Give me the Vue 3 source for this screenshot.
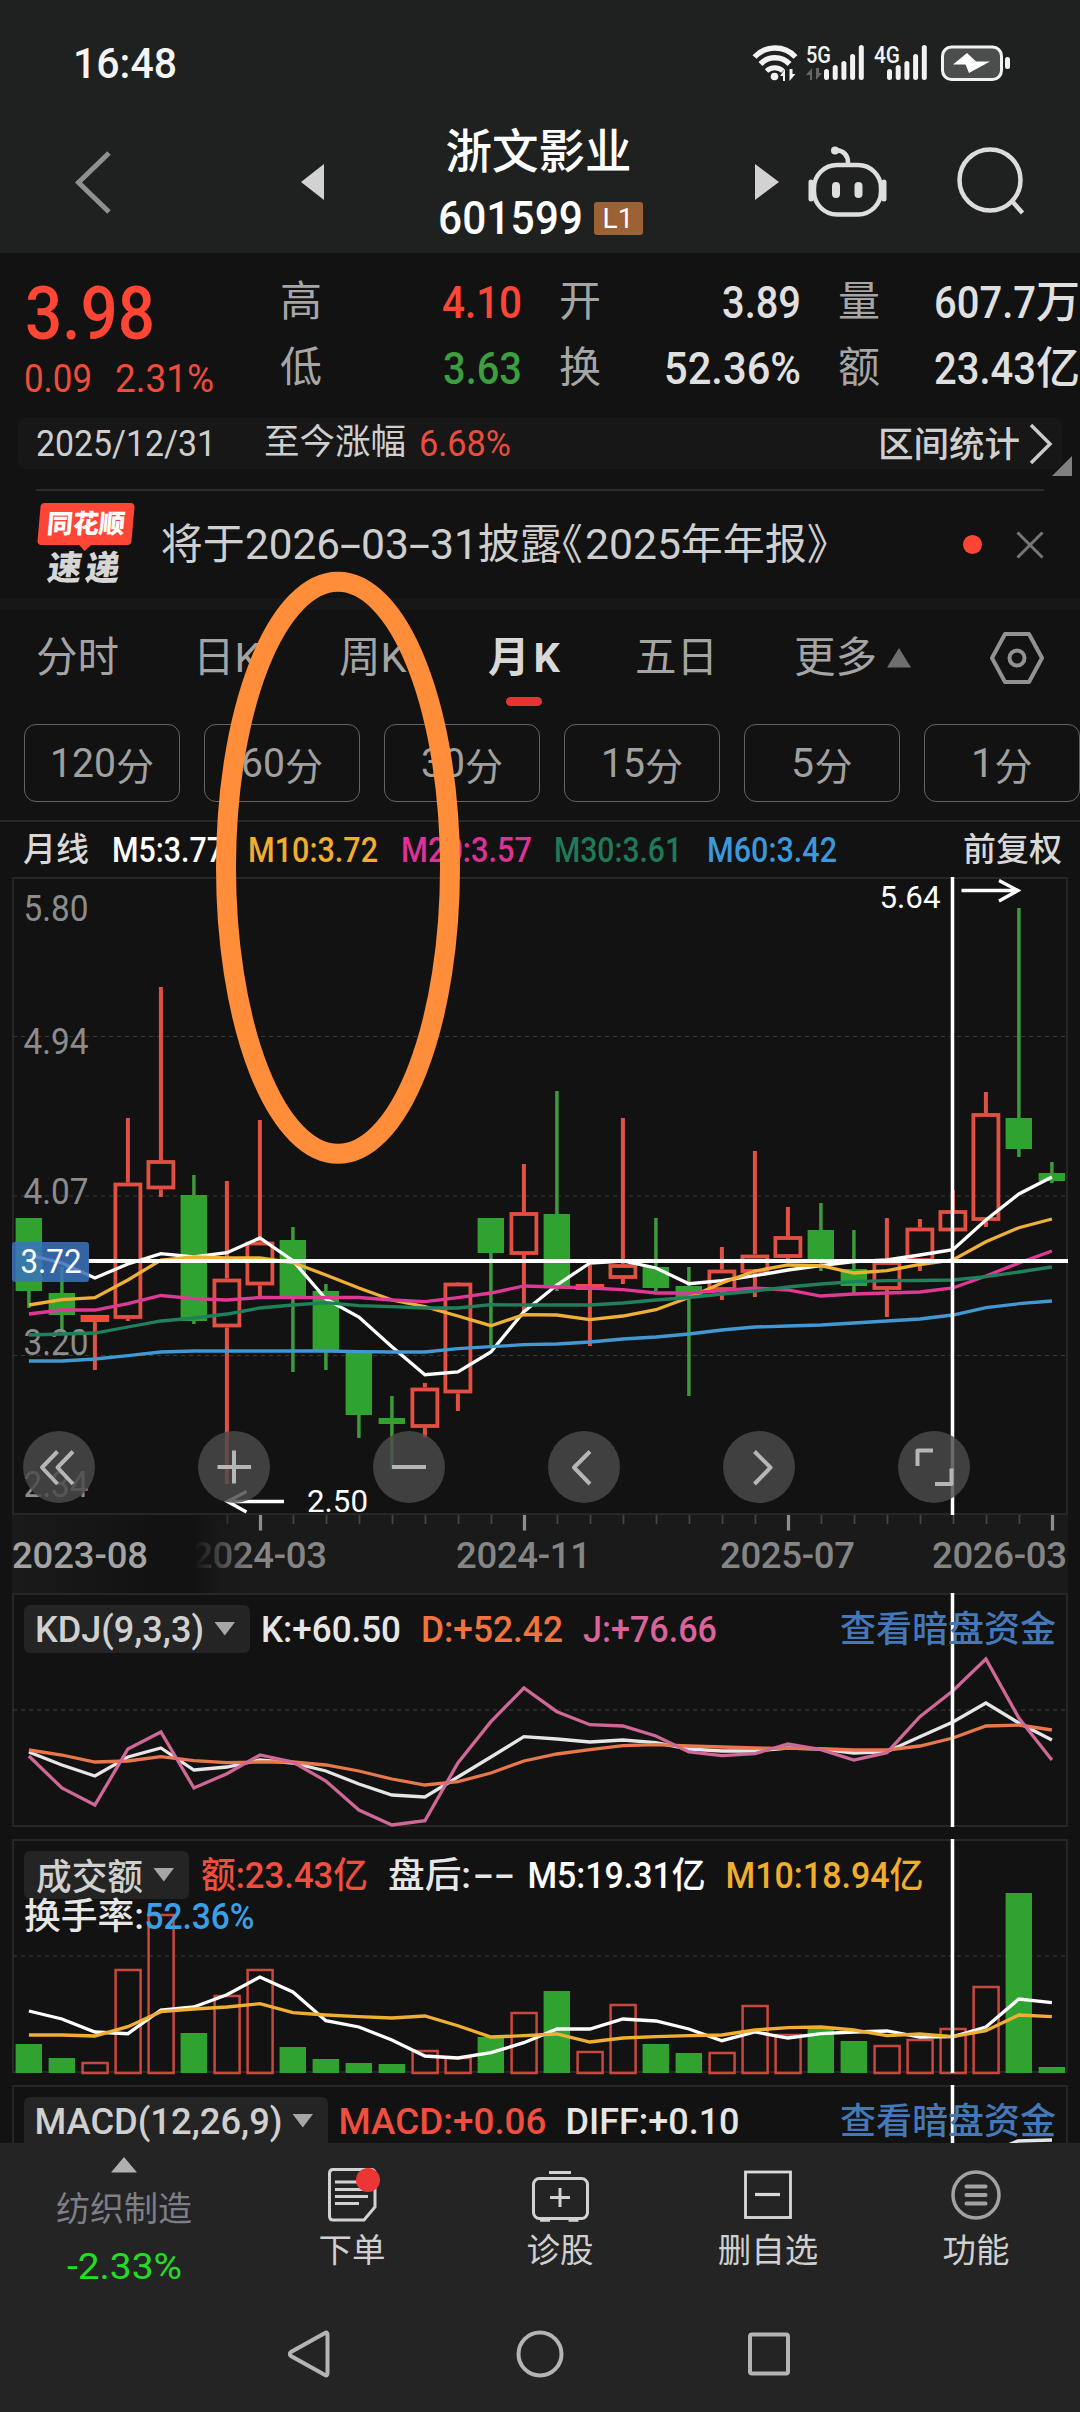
<script setup>
const vFit = {
  mounted(el, { value }) {
    const natural = el.getBoundingClientRect().width
    if (!natural) return
    el.style.transform = `scaleX(${value / natural})`
    el.style.marginRight = `${value - natural}px`
  }
}

const quotes = [
  [
    { k: '高', v: '4.10', w: 80, c: 'up' },
    { k: '开', v: '3.89', w: 79 },
    { k: '量', v: '607.7', w: 102, u: '万' }
  ],
  [
    { k: '低', v: '3.63', w: 79, c: 'down' },
    { k: '换', v: '52.36%', w: 137 },
    { k: '额', v: '23.43', w: 102, u: '亿' }
  ]
]

const tabs = [
  { t: '分时', x: 36 },
  { t: '日K', x: 193 },
  { t: '周K', x: 339 },
  { t: '月K', x: 488, on: true },
  { t: '五日', x: 635 },
  { t: '更多', x: 794, more: true }
]

const minutes = [
  { n: '120', w: 66 },
  { n: '60', w: 44 },
  { n: '30', w: 44 },
  { n: '15', w: 44 },
  { n: '5', w: 23 },
  { n: '1', w: 23 }
]

const averages = [
  { t: 'M5:3.77', x: 112, w: 112, c: '#ffffff' },
  { t: 'M10:3.72', x: 248, w: 130, c: '#f0ae2c' },
  { t: 'M20:3.57', x: 401, w: 131, c: '#dc3298' },
  { t: 'M30:3.61', x: 554, w: 128, c: '#1f7a57' },
  { t: 'M60:3.42', x: 707, w: 130, c: '#3c98d8' }
]

const px = (i) => 28.9 + i * 33
const line = (ys) => ys.map((y, i) => `${px(i).toFixed(1)},${y}`).join(' ')

// up, body top, body bottom, high, low
const candles = [
  [0, 1218, 1291, 1218, 1308], [0, 1293, 1315, 1267, 1330], [1, 1315, 1322, 1315, 1370],
  [1, 1182.5, 1319, 1118, 1321], [1, 1160, 1189.5, 987, 1197], [0, 1195, 1321, 1175, 1324],
  [1, 1278.5, 1327.5, 1181, 1484], [1, 1241.5, 1285.5, 1120, 1296], [0, 1240, 1298, 1227, 1372],
  [0, 1291, 1351, 1284, 1370], [0, 1353, 1415, 1353, 1438], [0, 1418, 1424, 1396, 1469],
  [1, 1387.5, 1428, 1383, 1438], [1, 1282.5, 1393.5, 1282, 1411], [0, 1218, 1253, 1218, 1345],
  [1, 1212, 1255, 1164, 1312], [0, 1214, 1286, 1091, 1291], [1, 1284, 1290, 1265, 1346],
  [1, 1264, 1279, 1118, 1284], [0, 1267, 1288, 1218, 1291], [0, 1286, 1297, 1267, 1396],
  [1, 1269.5, 1291, 1247, 1300], [1, 1254.5, 1273, 1151, 1297], [1, 1236, 1258, 1207, 1262],
  [0, 1230, 1261, 1203, 1271], [0, 1269, 1286, 1230, 1293], [1, 1261, 1290, 1218, 1317],
  [1, 1227.5, 1262, 1219, 1271], [1, 1210, 1231.5, 1190, 1231], [1, 1113, 1221, 1092, 1227],
  [0, 1118, 1149, 908, 1157], [0, 1173, 1181, 1162, 1183]
]

const maLines = [
  { c: '#ffffff', p: [1255, 1263, 1278, 1264, 1253.7, 1257, 1252.7, 1238, 1260.7, 1299, 1317, 1346.7, 1374.7, 1372, 1352, 1311.7, 1285, 1263, 1261, 1268, 1283.7, 1280.7, 1275.7, 1270, 1265.7, 1261.7, 1260, 1255, 1249.7, 1220, 1194, 1177] },
  { c: '#f0b037', p: [1305, 1299.7, 1297.7, 1280, 1260, 1257, 1258, 1258, 1262.5, 1275, 1288, 1300, 1306.7, 1316, 1325.7, 1314.7, 1315, 1319.7, 1316, 1309.7, 1297.5, 1283, 1271, 1265, 1265.7, 1273, 1270.7, 1264.5, 1260, 1241.7, 1227.7, 1219] },
  { c: '#dc3a95', p: [1314, 1310, 1310, 1303.7, 1295.5, 1298.7, 1300, 1297.5, 1297.7, 1297.5, 1297.5, 1300, 1301.7, 1297.7, 1293, 1286, 1287, 1288, 1289.7, 1293, 1293, 1290.7, 1288, 1290, 1296, 1294, 1293, 1292, 1288, 1276, 1263, 1251] },
  { c: '#20805c', p: [1335, 1334, 1333, 1327, 1321, 1318, 1314, 1308, 1305, 1302.7, 1305.7, 1306.7, 1308, 1308, 1304.7, 1305, 1305, 1305, 1303, 1300, 1297.5, 1294, 1291, 1287, 1284, 1281.7, 1280.7, 1280.5, 1280, 1276.7, 1272, 1267] },
  { c: '#4298d2', p: [1361, 1361, 1359, 1355.7, 1352, 1351, 1351, 1351, 1351, 1351, 1351.7, 1352, 1352, 1348.7, 1346.7, 1344.7, 1344, 1342, 1339, 1337, 1334, 1330, 1327, 1326, 1325, 1323, 1321, 1319, 1315, 1307.7, 1303.7, 1301] }
]

const kdj = [
  { c: '#e6e6e6', p: [1752, 1765, 1776, 1757, 1748, 1770, 1767, 1760, 1763, 1771, 1784, 1795, 1797, 1777, 1757, 1736.7, 1739, 1742, 1740, 1742.7, 1749, 1751, 1751, 1748, 1749, 1753, 1751.7, 1736.7, 1722, 1703, 1723, 1740] },
  { c: '#e8784a', p: [1750, 1755, 1762, 1761, 1756.7, 1760.7, 1762.7, 1762, 1762, 1765, 1771, 1779, 1785, 1781.7, 1773, 1761, 1754, 1749.7, 1745.7, 1744.7, 1746, 1747, 1748, 1748.3, 1748.7, 1750, 1750, 1746, 1738, 1726, 1725, 1730] },
  { c: '#cf6797', p: [1756, 1788, 1805, 1749, 1732, 1788, 1773.7, 1755, 1762, 1781, 1810, 1825, 1820.7, 1763, 1721.7, 1688, 1711.7, 1724.7, 1726, 1736, 1752, 1755.7, 1753.7, 1744, 1749.7, 1760, 1752.7, 1716.7, 1690.7, 1659, 1718, 1760] }
]

const volumes = [2044, 2058, 2062, 1969, 1914, 2033, 1995, 1969, 2047, 2059, 2063, 2064, 2050, 2057, 2037, 2012, 1991, 2051, 2004, 2044, 2053, 2052, 2005, 2034, 2029, 2041, 2045, 2039, 2028, 1986, 1893, 2067]

const volLines = [
  { c: '#ffffff', p: [2011, 2019, 2032, 2033.7, 2010, 2007, 1994.7, 1977, 1992, 2020.7, 2027, 2040, 2056, 2058, 2052.7, 2042.7, 2029, 2029, 2019, 2021, 2029, 2040.7, 2032, 2038, 2033.7, 2032, 2031, 2037, 2036.7, 2027, 1999, 2002.7] },
  { c: '#f0ae35', p: [2035, 2035, 2036, 2026.7, 2011.7, 2009, 2007, 2003.7, 2012.7, 2015, 2016.7, 2018, 2016, 2025.7, 2037, 2035.7, 2034, 2042, 2038, 2036.7, 2035.7, 2035, 2030, 2027.7, 2027, 2030, 2035.7, 2034, 2036.7, 2030.7, 2015, 2016.7] }
]

const prices = [['5.80', 920.5], ['4.94', 1054], ['4.07', 1203.5], ['3.20', 1355], ['2.34', 1496.5]]
const dates = [['2024-03', 193], ['2024-11', 457], ['2025-07', 721], ['2026-03', 933]]
const ticks = Array.from({ length: 26 }, (_, n) => n + 6)
const tools = [
  'M57.500 1451.500L42 1467.500L57.500 1484M73 1451.500L57.500 1467.500L73 1484',
  'M217.500 1467H251M234 1450.500V1483.500',
  'M392 1467H426',
  'M590 1451.500L574 1467.500L590 1484',
  'M754.500 1451.500L770.500 1467.500L754.500 1484',
  'M933 1450.500H917.500V1466M951.500 1468.500V1484H935'
]
</script>

<template>
  <div class="screen">
    <div class="status">
      <span v-fit="104" class="clock fit">16:48</span>
      <svg width="262" height="44" viewBox="751 41 262 44">
        <g fill="none" stroke="#f2f2f2" stroke-width="5.500">
          <path d="M754.500 57A28 28 0 0 1 795.500 57" />
          <path d="M760.500 64A20 20 0 0 1 789.500 64" />
          <path d="M766.500 71A12 12 0 0 1 783 71" stroke-width="5" />
        </g>
        <circle cx="774.500" cy="76.500" r="3.800" fill="#f2f2f2" />
        <path d="M785 69v12h-2v-5h-3zM789.500 69v12l6-7h-3v-5z" fill="#f2f2f2" />
        <path d="M812 68v12h-2v-5h-4zM816 68v12l6-7h-3v-5z" fill="#666" />
        <g fill="#f2f2f2" class="net">
          <text x="806" y="62.500" textLength="25" lengthAdjust="spacingAndGlyphs">5G</text>
          <text x="874" y="62.500" textLength="26" lengthAdjust="spacingAndGlyphs">4G</text>
        </g>
        <g fill="#f2f2f2">
          <template v-for="b in [824, 887]" :key="b">
            <rect v-for="(h, n) in [11, 15, 19, 26, 35]" :key="n" :x="b + n * 8.7" :y="80 - h" width="5" :height="h" rx="2.500" />
          </template>
        </g>
        <rect x="942.500" y="47" width="59" height="32.500" rx="9" fill="#4c4d4d" stroke="#f2f2f2" stroke-width="3" />
        <rect x="1005" y="57" width="5" height="12" rx="2.500" fill="#f2f2f2" />
        <path d="M967 53l-14 11.500h12.500l3.500 8.500l21-11.500h-14z" fill="#fff" />
      </svg>
    </div>

    <div class="title">
      <svg class="back" width="40" height="70" viewBox="73 147 40 70"><path d="M109 153L78.500 182.500L109 212" fill="none" stroke="#909090" stroke-width="5" /></svg>
      <svg width="24" height="36" viewBox="0 0 24 36"><path d="M0 18L23 0V36z" fill="#d2d2d2" /></svg>
      <div class="stock">
        <div class="name">浙文影业</div>
        <div class="code"><span v-fit="145" class="fit">601599</span><i>L1</i></div>
      </div>
      <svg width="24" height="36" viewBox="0 0 24 36"><path d="M24 18L0 0V36z" fill="#d2d2d2" /></svg>
      <svg class="robot" width="80" height="76" viewBox="807 143 80 76" fill="none" stroke="#dedede" stroke-width="4.500">
        <path d="M836 149Q848 150 848 162" />
        <circle cx="835" cy="149.500" r="4" fill="#dedede" stroke="none" />
        <rect x="814" y="164" width="67" height="49.500" rx="23" />
        <path d="M811 181v17M884 181v17" stroke-width="5" stroke-linecap="round" />
        <path d="M836 185v8M858.500 185v8" stroke-width="8" stroke-linecap="round" />
      </svg>
      <svg class="search" width="72" height="72" viewBox="955 146 72 72" fill="none" stroke="#dcdcdc" stroke-width="4.500">
        <circle cx="990" cy="180" r="30.500" /><path d="M1012 201L1022.500 213" />
      </svg>
    </div>

    <div class="quote">
      <div class="last up">
        <div class="price"><span v-fit="130" class="fit">3.98</span></div>
        <div class="change"><span v-fit="68" class="fit">0.09</span><span v-fit="99" class="fit">2.31%</span></div>
      </div>
      <div class="grid">
        <div v-for="(row, r) in quotes" :key="r" class="qrow">
          <div v-for="q in row" :key="q.k" class="cell">
            <b>{{ q.k }}</b>
            <div class="val" :class="q.c"><span v-fit="q.w" class="fit">{{ q.v }}</span><em v-if="q.u">{{ q.u }}</em></div>
          </div>
        </div>
      </div>
    </div>

    <div class="range">
      <span v-fit="180" class="fit num">2025/12/31</span>
      <span class="since">至今涨幅</span>
      <span v-fit="92" class="fit num up">6.68%</span>
      <span class="stat">区间统计</span>
      <svg width="24" height="42" viewBox="0 0 24 42"><path d="M2 2L21 21L2 40" fill="none" stroke="#ccc" stroke-width="3.500" /></svg>
      <svg class="corner" width="20" height="20" viewBox="0 0 20 20"><path d="M20 0V20H0z" fill="#808080" /></svg>
    </div>

    <div class="news">
      <div class="logo">
        <div class="tag"><span>同花顺</span></div>
        <div class="express">速递</div>
      </div>
      <div class="headline">
        <span>将于</span><span v-fit="95" class="fit">2026</span><span v-fit="21" class="fit">-</span><span v-fit="48" class="fit">03</span><span v-fit="21" class="fit">-</span><span v-fit="48" class="fit">31</span><span class="half">披露《</span><span v-fit="96" class="fit year">2025</span><span class="half">年年报》</span>
      </div>
      <span class="dot"></span>
      <svg width="28" height="28" viewBox="0 0 28 28"><path d="M1.500 1.500L26.500 26.500M26.500 1.500L1.500 26.500" stroke="#777" stroke-width="3" /></svg>
    </div>

    <div class="band"></div>

    <div class="tabs">
      <div v-for="(t, n) in tabs" :key="t.t" class="tab" :class="{ on: t.on }" :style="{ width: (n < 5 ? tabs[n + 1].x : 990) - t.x + 'px' }">
        <span>{{ t.t }}</span>
        <svg v-if="t.more" width="26" height="22" viewBox="0 0 26 22"><path d="M13 1L25 20.500H1z" fill="#6e6e6e" /></svg>
      </div>
      <svg class="gear" width="56" height="56" viewBox="0 0 56 56" fill="none" stroke="#929292" stroke-width="4">
        <path d="M16 4H40L53 28L40 52H16L3 28z" stroke-linejoin="round" /><circle cx="28" cy="28" r="7.500" />
      </svg>
    </div>

    <div class="minutes">
      <div v-for="m in minutes" :key="m.n"><span v-fit="m.w" class="fit">{{ m.n }}</span><em>分</em></div>
    </div>

    <div class="averages">
      <span class="cn">月线</span>
      <div v-for="(a, n) in averages" :key="a.t" :style="{ color: a.c, width: (n < 4 ? averages[n + 1].x : 963) - a.x + 'px' }"><span v-fit="a.w" class="fit">{{ a.t }}</span></div>
      <span class="cn">前复权</span>
    </div>

    <svg class="panel" width="1080" height="717" viewBox="0 876 1080 717">
      <g stroke="#383838" stroke-width="1.200" stroke-dasharray="4 4" fill="none">
        <path d="M13 1036.500H1066M13 1196H1066M13 1355.500H1066" />
      </g>
      <path d="M13 1514V878H1067V1514z" fill="none" stroke="#262626" stroke-width="2" />
      <g v-for="(k, i) in candles" :key="i">
        <template v-if="k[0]">
          <path :d="`M${px(i)} ${k[3]}V${k[1]}M${px(i)} ${k[2]}V${k[4]}`" stroke="#e05043" stroke-width="4" />
          <rect v-if="k[2] - k[1] < 8" :x="px(i) - 14.300" :y="k[1]" width="28.600" :height="k[2] - k[1]" fill="#f54a38" />
          <rect v-else :x="px(i) - 12.500" :y="k[1] + 2" width="25" :height="k[2] - k[1] - 4" fill="none" stroke="#e05043" stroke-width="3.800" />
        </template>
        <template v-else>
          <path :d="`M${px(i)} ${k[3]}V${k[4]}`" stroke="#3c9a3c" stroke-width="3.500" />
          <rect :x="px(i) - 13.300" :y="k[1]" width="26.400" :height="k[2] - k[1]" fill="#30a230" />
        </template>
      </g>
      <g fill="#8c8c8c" font-size="36.500">
        <text v-for="p in prices" :key="p[0]" x="23.500" :y="p[1]" textLength="65" lengthAdjust="spacingAndGlyphs">{{ p[0] }}</text>
      </g>
      <polyline v-for="l in maLines" :key="l.c" :points="line(l.p)" fill="none" :stroke="l.c" stroke-width="3.300" />
      <g fill="none" stroke="#fff" stroke-width="3.300">
        <path d="M961.500 890.500H1018M999 880.500L1018 890.500L999 901" />
        <path d="M284 1501.500H228M246.500 1491.500L227.500 1501.500L246.500 1512" />
      </g>
      <g fill="#fff" font-size="32">
        <text x="879.500" y="907.500" textLength="61" lengthAdjust="spacingAndGlyphs">5.64</text>
        <text x="307" y="1511.500" textLength="61" lengthAdjust="spacingAndGlyphs">2.50</text>
      </g>
      <path d="M88 1261H1068" stroke="#fff" stroke-width="3.800" />
      <path d="M952.500 877V1515" stroke="#fff" stroke-width="3.500" />
      <rect x="12" y="1242" width="77" height="40" rx="3" fill="#3b72bd" opacity=".86" />
      <text x="20.500" y="1272.500" font-size="33" fill="#fff" textLength="61" lengthAdjust="spacingAndGlyphs">3.72</text>
      <g v-for="(d, n) in tools" :key="d">
        <circle :cx="59 + n * 175" cy="1467" r="36" fill="#4a4a4a" opacity=".82" />
        <path :d="d" fill="none" stroke="#b6b6b6" stroke-width="4" stroke-linejoin="round" />
      </g>
      <rect x="12" y="1515" width="1056" height="78" fill="#1a1a1a" />
      <g v-for="i in ticks" :key="i">
        <path v-if="(i - 7) % 8 === 0" :d="`M${px(i) + 0.6} 1515v15.500`" stroke="#8d8d8d" stroke-width="3.200" />
        <path v-else :d="`M${px(i) + 0.6} 1515v9`" stroke="#464646" stroke-width="1.800" />
      </g>
      <g fill="#858585" class="dates">
        <text v-for="d in dates" :key="d[0]" :x="d[1] - 1" y="1568" textLength="135" lengthAdjust="spacing">{{ d[0] }}</text>
      </g>
      <defs><linearGradient id="fade"><stop offset="0" stop-color="#1a1a1a" /><stop offset=".6" stop-color="#121212" /><stop offset=".76" stop-color="#121212" /><stop offset="1" stop-color="#1a1a1a" stop-opacity="0" /></linearGradient></defs>
      <rect x="12" y="1515" width="240" height="78" fill="url(#fade)" />
      <text x="12" y="1568" class="dates" fill="#a3a3a3" textLength="136" lengthAdjust="spacing">2023-08</text>
    </svg>

    <svg class="panel" width="1080" height="246" viewBox="0 1593 1080 246">
      <path d="M13 1594H1067V1826H13z" fill="none" stroke="#262626" stroke-width="2" />
      <path d="M13 1710H1066" stroke="#303030" stroke-width="1.500" stroke-dasharray="4 4" />
      <polyline v-for="l in kdj" :key="l.c" :points="line(l.p)" fill="none" :stroke="l.c" stroke-width="3.300" />
      <path d="M952.500 1593V1827" stroke="#fff" stroke-width="3.500" />
      <rect x="24" y="1605" width="226" height="48" rx="6" fill="#242424" />
      <path d="M214.500 1622H235L224.800 1635.500z" fill="#a6a6a6" />
      <g class="mixed">
        <text x="35" y="1642" fill="#d0d0d0" textLength="169" lengthAdjust="spacingAndGlyphs">KDJ(9,3,3)</text>
        <text x="261" y="1642" fill="#e6e6e6" textLength="140" lengthAdjust="spacingAndGlyphs">K:+60.50</text>
        <text x="421" y="1642" fill="#f0743c" textLength="142" lengthAdjust="spacingAndGlyphs">D:+52.42</text>
        <text x="583" y="1642" fill="#d9649a" textLength="134" lengthAdjust="spacingAndGlyphs">J:+76.66</text>
      </g>
      <text class="link" x="840" y="1642">查看暗盘资金</text>
    </svg>

    <svg class="panel" width="1080" height="246" viewBox="0 1839 1080 246">
      <path d="M13 1840H1067V2072H13z" fill="none" stroke="#262626" stroke-width="2" />
      <path d="M13 1956H1066" stroke="#303030" stroke-width="1.500" stroke-dasharray="4 4" />
      <template v-for="(y, i) in volumes" :key="i">
        <rect v-if="candles[i][0]" :x="px(i) - 12.300" :y="y + 1" width="25" :height="2072 - y" fill="none" stroke="#c9483e" stroke-width="2.500" />
        <rect v-else :x="px(i) - 13.300" :y="y" width="26.400" :height="2073 - y" fill="#30a230" />
      </template>
      <polyline v-for="l in volLines" :key="l.c" :points="line(l.p)" fill="none" :stroke="l.c" stroke-width="3.300" />
      <path d="M952.500 1839V2073" stroke="#fff" stroke-width="3.500" />
      <rect x="24" y="1851" width="165" height="48" rx="6" fill="#242424" />
      <path d="M153.500 1868H174L163.800 1881.500z" fill="#a6a6a6" />
      <g class="mixed">
        <text x="36" y="1889.500" fill="#d0d0d0" textLength="107" lengthAdjust="spacingAndGlyphs">成交额</text>
        <text x="201" y="1888" fill="#f04e3e" textLength="167" lengthAdjust="spacingAndGlyphs">额:23.43亿</text>
        <text x="388" y="1888" fill="#e6e6e6" textLength="83" lengthAdjust="spacingAndGlyphs">盘后:</text>
        <text x="473" y="1888" fill="#e6e6e6" textLength="42" lengthAdjust="spacingAndGlyphs">--</text>
        <text x="527.500" y="1888" fill="#fff" textLength="178" lengthAdjust="spacingAndGlyphs">M5:19.31亿</text>
        <text x="725.500" y="1888" fill="#f0ae2c" textLength="198" lengthAdjust="spacingAndGlyphs">M10:18.94亿</text>
        <text x="24" y="1929" fill="#e6e6e6" textLength="120" lengthAdjust="spacingAndGlyphs">换手率:</text>
        <text x="144.500" y="1929" fill="#3aa0e6" textLength="110" lengthAdjust="spacingAndGlyphs">52.36%</text>
      </g>
    </svg>

    <svg class="panel" width="1080" height="58" viewBox="0 2085 1080 58">
      <path d="M13 2150V2086H1067V2150" fill="none" stroke="#262626" stroke-width="2" />
      <path d="M952.500 2085V2143" stroke="#fff" stroke-width="3.500" />
      <path d="M1008 2145L1018 2141L1052 2140" fill="none" stroke="#e6e6e6" stroke-width="3.300" />
      <rect x="24" y="2097" width="304" height="52" rx="6" fill="#242424" />
      <path d="M292.500 2114H313L302.800 2127.500z" fill="#a6a6a6" />
      <g class="mixed">
        <text x="34.500" y="2134" fill="#d0d0d0" textLength="248" lengthAdjust="spacingAndGlyphs">MACD(12,26,9)</text>
        <text x="338.500" y="2133.500" fill="#f04e3e" textLength="208" lengthAdjust="spacingAndGlyphs">MACD:+0.06</text>
        <text x="565.500" y="2133.500" fill="#e6e6e6" textLength="174" lengthAdjust="spacingAndGlyphs">DIFF:+0.10</text>
      </g>
      <text class="link" x="840" y="2134">查看暗盘资金</text>
    </svg>

    <div class="dock">
      <div class="sector">
        <svg width="28" height="16" viewBox="0 0 28 16"><path d="M14 0L27 15.500H1z" fill="#b0b0b0" /></svg>
        <div class="sname">纺织制造</div>
        <div class="spct"><span v-fit="115" class="fit">-2.33%</span></div>
      </div>
      <div class="item">
        <svg width="60" height="60" viewBox="322 2165 60 60" fill="none" stroke="#d2d2d2" stroke-width="3">
          <path d="M333 2169.500H371Q375 2169.500 375 2173.500V2207L364 2220H333Q329.500 2220 329.500 2216V2173.500Q329.500 2169.500 333 2169.500z" />
          <path d="M335 2182H360M335 2189.500H366M335 2196.500H368M335 2203.500H359" />
          <circle cx="368" cy="2180" r="12" fill="#ee3535" stroke="none" />
        </svg>
        <span>下单</span>
      </div>
      <div class="item">
        <svg width="60" height="60" viewBox="530 2165 60 60" fill="none" stroke="#d2d2d2" stroke-width="3">
          <rect x="533.500" y="2178.500" width="54" height="40" rx="6" />
          <path d="M549 2172.500H571M560 2188V2207M550 2197.500H570" />
          <path d="M540 2220.500H550M568.500 2220.500H578.500" stroke-width="2.500" />
        </svg>
        <span>诊股</span>
      </div>
      <div class="item">
        <svg width="60" height="60" viewBox="738 2165 60 60" fill="none" stroke="#dadada" stroke-width="2.800">
          <rect x="745.500" y="2172" width="45" height="45.500" /><path d="M755 2194.500H780" stroke-width="3.200" />
        </svg>
        <span>删自选</span>
      </div>
      <div class="item">
        <svg width="60" height="60" viewBox="946 2165 60 60" fill="none" stroke="#a2a2a2" stroke-width="3.500">
          <circle cx="976" cy="2195" r="23" /><path d="M966.500 2186.500H985.500M966.500 2195H985.500M966.500 2203.500H985.500" stroke-width="4" stroke-linecap="round" />
        </svg>
        <span>功能</span>
      </div>
    </div>

    <div class="nav">
      <svg width="504" height="54" viewBox="288 2327 504 54" fill="none" stroke="#b4b4b4" stroke-width="4">
        <path d="M325 2333Q327.500 2331.500 327.500 2335V2373Q327.500 2376.500 325 2375L291 2356Q288.500 2354 291 2352z" />
        <circle cx="540" cy="2354" r="21.500" />
        <rect x="750" y="2334.500" width="38" height="39" rx="2" />
      </svg>
    </div>

    <svg class="mark" width="246" height="594" viewBox="215 571 246 594"><ellipse cx="338" cy="867.800" rx="112" ry="286" fill="none" stroke="#ff8d39" stroke-width="20" /></svg>
  </div>
</template>

<style>
body { margin: 0; background: #121212; }
</style>

<style scoped>
.screen { position: relative; width: 1080px; height: 2412px; overflow: hidden; background: #121212; color: #d8d8d8; font-family: Roboto, "Noto Sans CJK SC", sans-serif; display: flex; flex-direction: column; }
.screen > * { flex: none; box-sizing: border-box; }
svg { display: block; flex: none; }
svg text { font-family: Roboto, "Noto Sans CJK SC", sans-serif; }
i, em, b { font-style: normal; font-weight: inherit; }
.fit { display: inline-block; white-space: nowrap; transform-origin: 0 50%; flex: none; }
.up { color: #ff4635; }
.down { color: #3c9e3c; }

.status { height: 104px; background: #1f2120; display: flex; align-items: center; justify-content: space-between; padding: 22px 67px 0 73px; }
.clock { font-size: 42px; font-weight: 500; line-height: 44px; color: #f4f4f4; padding-top: 1px; }
.net { font-size: 23px; font-weight: 500; }

.title { height: 149px; background: #1f2120; display: flex; align-items: center; padding: 6px 53px 0 73px; }
.title .back { margin-right: 188px; }
.stock { width: 430px; height: 149px; margin-top: -6px; display: flex; flex-direction: column; align-items: center; color: #fff; }
.name { font-size: 46.500px; font-weight: 500; line-height: 50px; margin: 23px 3px 0 0; }
.code { display: flex; align-items: center; font-size: 47px; font-weight: 500; line-height: 50px; margin: 16px 0 0 0; height: 50px; }
.code i { width: 49px; height: 33px; margin-left: 11px; border-radius: 3px; background: #9c6235; font-size: 28px; font-weight: 400; line-height: 34px; text-align: center; }
.robot { margin-left: 28px; }
.search { margin-left: 68px; }

.quote { height: 165px; display: flex; padding-top: 16px; }
.last { width: 280px; padding-left: 25px; box-sizing: border-box; }
.price { font-size: 74px; font-weight: 500; line-height: 80px; height: 80px; padding-top: 5px; }
.change { display: flex; gap: 23px; font-size: 38px; line-height: 44px; margin-top: 3px; margin-left: -1px; color: #f04c3c; }
.qrow { display: flex; height: 66px; align-items: center; }
.cell { display: flex; width: 242px; margin-right: 37px; justify-content: space-between; align-items: center; font-size: 44px; line-height: 50px; }
.cell b { font-size: 42px; color: #a6a6a6; line-height: 50px; }
.cell:last-child { margin-right: 0; }
.val { display: flex; align-items: center; margin-top: 2px; font-weight: 500; }
.val:not(.up):not(.down) { color: #e0e0e0; }
.val em { font-size: 44px; }

.range { position: relative; height: 51px; margin: 0 18px; border-radius: 8px; background: #171717; display: flex; align-items: center; padding-left: 18px; font-size: 35.500px; line-height: 44px; color: #cfcfcf; }
.range .num { font-size: 36.500px; }
.range .up { color: #e84d3f; margin-left: 13px; }
.since { margin-left: 48px; margin-top: -3px; }
.stat { margin-left: auto; margin-right: 9px; margin-top: 2px; font-weight: 500; }
.range > svg { margin-right: 9px; }
.range .corner { position: absolute; right: -10px; bottom: -7px; margin: 0; }

.news { height: 109px; margin: 20px 36px 0; border-top: 2px solid #2c2c2c; display: flex; align-items: center; }
.logo { width: 100px; align-self: flex-start; padding-top: 12px; }
.tag { position: relative; width: 94px; height: 42px; margin-left: 3px; border-radius: 4px; background: #ff4636; transform: skewX(-5deg); color: #fff; font-size: 26px; font-weight: 900; line-height: 42px; text-align: center; }
.tag::after { content: ''; position: absolute; left: 41px; top: 41px; border: 7px solid transparent; border-top-color: #ff4636; border-bottom: 0; }
.express { margin: 6px 0 0 12px; width: 74px; font-size: 34px; font-weight: 900; line-height: 34px; letter-spacing: 4px; white-space: nowrap; transform: skewX(-8deg); color: #d6d6d6; }
.headline { display: flex; margin-left: 25px; width: 803px; font-size: 42px; line-height: 50px; color: #cfcfcf; }
.half { font-feature-settings: "halt"; white-space: nowrap; }
.year { margin-left: 2px; }
.dot { width: 19px; height: 19px; border-radius: 50%; background: #ff4636; margin: 0 34px 0 2px; }
.band { height: 12px; background: #171717; }

.tabs { display: flex; height: 114px; padding-left: 36px; padding-top: 22px; }
.tab { display: flex; position: relative; height: 52px; font-size: 41.500px; line-height: 52px; color: #a4a4a4; align-items: center; }
.tab svg { margin-left: 9px; }
.tab.on { color: #d8d8d8; font-weight: 700; letter-spacing: 4px; }
.tab.on::after { content: ''; position: absolute; left: 18px; top: 65px; width: 36px; height: 9px; border-radius: 5px; background: #e43434; }
.gear { margin-left: -1px; margin-top: -2px; }

.minutes { display: flex; gap: 24px; padding: 0 24px; height: 96px; width: 1104px; }
.minutes div { flex: none; box-sizing: border-box; width: 156px; height: 78px; border: 1.500px solid #646464; border-radius: 12px; display: flex; align-items: center; justify-content: center; font-size: 41px; color: #a0a0a0; }
.minutes em { font-size: 38px; }

.averages { display: flex; align-items: center; height: 56px; border-top: 2px solid #2a2a2a; padding-left: 23px; padding-top: 2px; font-size: 34.500px; font-weight: 500; color: #d8d8d8; line-height: 40px; }
.averages .cn { font-size: 33px; width: 89px; white-space: nowrap; }

.mixed { font-size: 36.500px; font-weight: 500; }
.dates { font-size: 36.500px; font-weight: 500; }
.link { font-size: 36px; font-weight: 500; fill: #4478b8; }

.dock { height: 157px; background: #242424; display: flex; }
.sector { width: 248px; padding-top: 14px; display: flex; flex-direction: column; align-items: center; }
.sname { font-size: 34px; line-height: 40px; margin-top: 16px; color: #7e7e88; }
.spct { font-size: 36px; line-height: 40px; margin-top: 18px; color: #22de22; }
.item { width: 208px; padding-top: 22px; display: flex; flex-direction: column; align-items: center; font-size: 33.500px; line-height: 40px; color: #d0d0d0; }
.item span { margin-top: 6px; }
.nav { height: 112px; background: #242424; display: flex; justify-content: center; padding-top: 27px; }
.mark { position: absolute; left: 215px; top: 571px; }
</style>
